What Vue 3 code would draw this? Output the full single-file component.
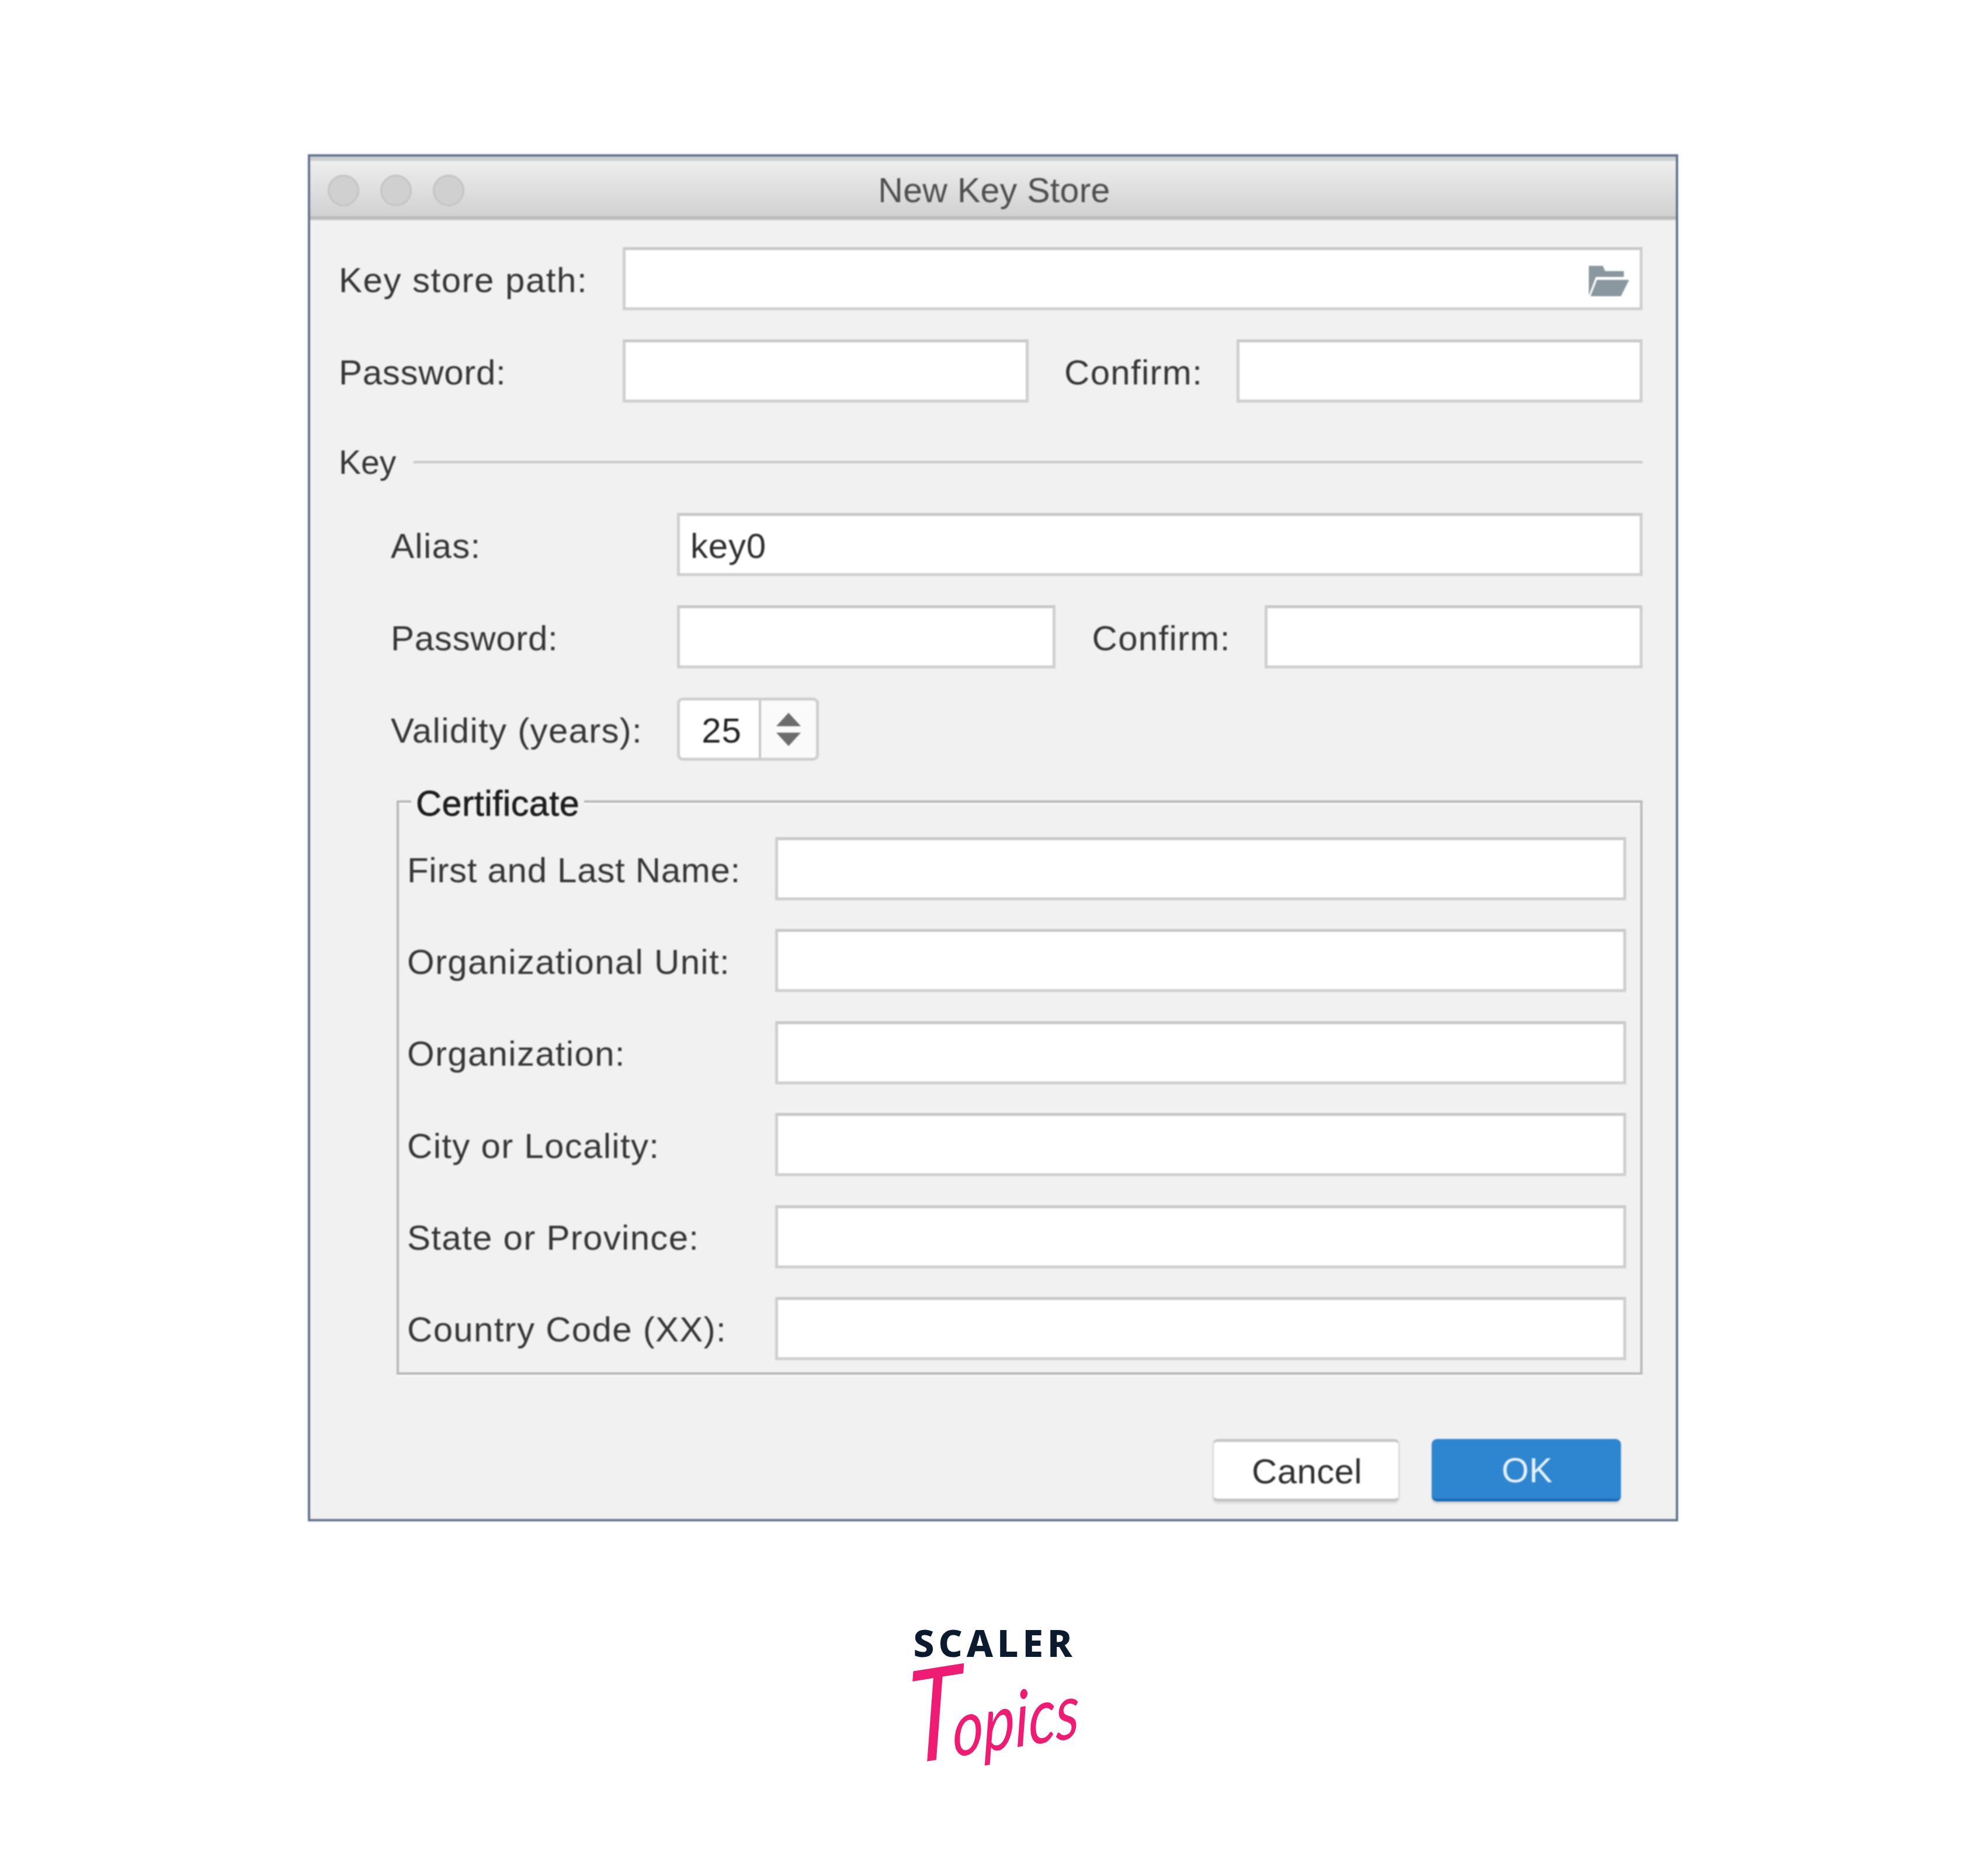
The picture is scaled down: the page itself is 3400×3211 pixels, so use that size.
<template>
  <div class="page">
    <div class="window">
      <div class="titlebar">
        <div class="lights">
          <span class="light"></span>
          <span class="light"></span>
          <span class="light"></span>
        </div>
        <span class="title">New Key Store</span>
      </div>

      <div class="content">
        <div class="row">
          <label class="label first path-label">Key store path:</label>
          <div class="path-wrap">
            <input class="field" />
            <svg class="folder" viewBox="0 0 69 52" width="69" height="52">
              <path d="M0 0H24L28 9H60V19H12L0 51Z" fill="#8a979f" />
              <path d="M14 24H69L55 52H3Z" fill="#8a979f" />
            </svg>
          </div>
        </div>
        <div class="row">
          <label class="label first tight">Password:</label>
          <input class="field" />
          <label class="label confirm">Confirm:</label>
          <input class="field" />
        </div>

        <div class="key-head">
          <span>Key</span>
          <div class="rule"></div>
        </div>

        <div class="key-section">
          <div class="row">
            <label class="label second">Alias:</label>
            <input class="field alias" value="key0" />
          </div>
          <div class="row">
            <label class="label second tight">Password:</label>
            <input class="field" />
            <label class="label confirm wide">Confirm:</label>
            <input class="field" />
          </div>
          <div class="row">
            <label class="label second">Validity (years):</label>
            <div class="spinner">
              <span class="spin-value">25</span>
              <div class="spin-arrows">
                <span class="arrow up"></span>
                <span class="arrow down"></span>
              </div>
            </div>
          </div>

          <div class="certificate">
            <span class="legend">Certificate</span>
            <div class="row cert-row" v-for="name in certFields" :key="name">
              <label class="label cert-label">{{ name }}</label>
              <input class="field" />
            </div>
          </div>
        </div>

        <div class="actions">
          <button class="btn cancel">Cancel</button>
          <button class="btn ok">OK</button>
        </div>
      </div>
    </div>

    <div class="logo">
      <div class="scaler">SCALER</div>
      <div class="topics"><span class="big-t">T</span>opics</div>
    </div>
  </div>
</template>

<script setup>
const certFields = [
  'First and Last Name:',
  'Organizational Unit:',
  'Organization:',
  'City or Locality:',
  'State or Province:',
  'Country Code (XX):'
]
</script>

<style>
html,
body {
  margin: 0;
  background: #fff;
}
</style>

<style scoped>
.page {
  width: 3400px;
  height: 3211px;
  box-sizing: border-box;
  padding-top: 264px;
  display: flex;
  flex-direction: column;
  align-items: center;
  background: #fff;
  font-family: "Liberation Sans", Arial, sans-serif;
  overflow: hidden;
}

.window {
  width: 2346px;
  height: 2340px;
  box-sizing: border-box;
  border: 4px solid #64738f;
  background: #f1f1f1;
  filter: blur(0.8px);
}

.titlebar {
  height: 108px;
  box-sizing: border-box;
  position: relative;
  display: flex;
  align-items: center;
  justify-content: center;
  background: linear-gradient(#cdd0d3 0, #cdd0d3 7px, #f0f0f0 8px, #ededed 13px, #e7e7e7 30px, #d2d2d2 100px);
  border-bottom: 6px solid #bcbcbc;
  box-shadow: 0 2px 0 #e6e6e6;
}

.lights {
  position: absolute;
  left: 30px;
  top: 31px;
  display: flex;
  gap: 36px;
}

.light {
  width: 54px;
  height: 54px;
  box-sizing: border-box;
  border-radius: 50%;
  border: 3px solid #c4c4c4;
  background: #d0d0d0;
}

.title {
  font-size: 59px;
  letter-spacing: 0.3px;
  color: #4f4f4f;
  margin-top: 14px;
  margin-left: 4px;
}

.content {
  padding: 47px 57px 0 49px;
  display: flex;
  flex-direction: column;
}

.row {
  display: flex;
  align-items: center;
  height: 108px;
  margin-bottom: 50px;
}

.label {
  font-size: 60px;
  letter-spacing: 1.3px;
  color: #363636;
  flex-shrink: 0;
  padding-top: 4px;
}

.label.tight {
  letter-spacing: 0.7px;
}

.label.first {
  width: 486px;
}

.label.path-label {
  letter-spacing: 1.5px;
}

.label.second {
  width: 490px;
}

.label.confirm {
  width: 295px;
  margin-left: 61px;
}

.label.confirm.wide {
  margin-left: 63px;
}

.field {
  flex: 1;
  min-width: 0;
  height: 108px;
  box-sizing: border-box;
  border: 5px solid #cfcfcf;
  border-top-color: #c8c8c8;
  background: #fff;
  padding: 4px 18px 0;
  font-family: inherit;
  font-size: 60px;
  letter-spacing: 0.8px;
  color: #2f2f2f;
  outline: none;
}

.path-wrap {
  flex: 1;
  position: relative;
  display: flex;
}

.folder {
  position: absolute;
  right: 23px;
  top: 32px;
}

.key-head {
  display: flex;
  align-items: center;
  height: 60px;
  margin-top: 22px;
  margin-bottom: 57px;
  font-size: 57px;
  letter-spacing: 0;
  color: #363636;
}

.rule {
  flex: 1;
  height: 4px;
  margin-left: 30px;
  background: #c9c9c9;
}

.key-section {
  padding-left: 89px;
  display: flex;
  flex-direction: column;
}

.spinner {
  width: 243px;
  height: 108px;
  box-sizing: border-box;
  display: flex;
  border: 5px solid #cfcfcf;
  border-radius: 10px;
  background: #fff;
}

.spin-value {
  width: 139px;
  box-sizing: border-box;
  border-right: 4px solid #c8c8c8;
  padding: 4px 0 0 8px;
  display: flex;
  align-items: center;
  justify-content: center;
  font-size: 60px;
  letter-spacing: 1px;
  color: #222;
}

.spin-arrows {
  flex: 1;
  display: flex;
  flex-direction: column;
  align-items: center;
  justify-content: center;
  gap: 11px;
  background: #fafafa;
  border-radius: 0 6px 6px 0;
}

.arrow {
  width: 0;
  height: 0;
  border-left: 21px solid transparent;
  border-right: 21px solid transparent;
}

.arrow.up {
  border-bottom: 23px solid #6c6c6c;
}

.arrow.down {
  border-top: 23px solid #6c6c6c;
}

.certificate {
  position: relative;
  margin-top: 18px;
  margin-left: 10px;
  box-sizing: border-box;
  height: 983px;
  padding: 59px 24px 0 14px;
  border: 4px solid #b8b8b8;
  box-shadow: 0 3px 0 #fbfbfb, inset 0 3px 0 #fbfbfb;
}

.legend {
  position: absolute;
  left: 21px;
  top: -37px;
  padding: 0 8px;
  line-height: 76px;
  background: #f1f1f1;
  font-size: 61px;
  letter-spacing: 0.5px;
  color: #1d1d1d;
  -webkit-text-stroke: 0.8px #1d1d1d;
}

.cert-label {
  width: 630px;
}

.cert-row:first-of-type .cert-label {
  letter-spacing: 0.7px;
}

.cert-row {
  margin-bottom: 49.4px;
}

.cert-row:last-child {
  margin-bottom: 0;
}

.actions {
  display: flex;
  justify-content: flex-end;
  gap: 55px;
  margin-top: 110px;
  padding-right: 37px;
}

.btn {
  height: 107px;
  box-sizing: border-box;
  border-radius: 9px;
  font-family: inherit;
  font-size: 60px;
  letter-spacing: 0.4px;
  padding: 4px 0 0 3px;
}

.cancel {
  width: 320px;
  background: #fff;
  color: #2f2f2f;
  border: 2px solid #d8d8d8;
  border-top: 5px solid #c6c6c6;
  border-bottom: 5px solid #c4c4c4;
  box-shadow: 0 4px 3px #ddd;
}

.ok {
  width: 324px;
  background: #2f86d0;
  color: #e6f1fa;
  border: none;
  border-bottom: 5px solid #1c6db8;
  box-shadow: 0 4px 3px #d4d4d4;
}

.logo {
  margin-top: 176px;
  margin-left: 6px;
  display: flex;
  flex-direction: column;
  align-items: center;
}

.scaler {
  font-family: "Noto Sans", sans-serif;
  font-weight: 800;
  font-size: 64px;
  line-height: 64px;
  letter-spacing: 7px;
  color: #0b1a2e;
}

.topics {
  margin-top: -4px;
  margin-right: 6px;
  font-family: "Lato", sans-serif;
  font-style: italic;
  font-size: 100px;
  line-height: 130px;
  letter-spacing: 0;
  color: #ef1c74;
  transform: rotate(-9deg) skewX(-8deg) scale(1.03, 1.32);
  transform-origin: 50% 30%;
}

.big-t {
  font-size: 165px;
  letter-spacing: -15px;
}
</style>
